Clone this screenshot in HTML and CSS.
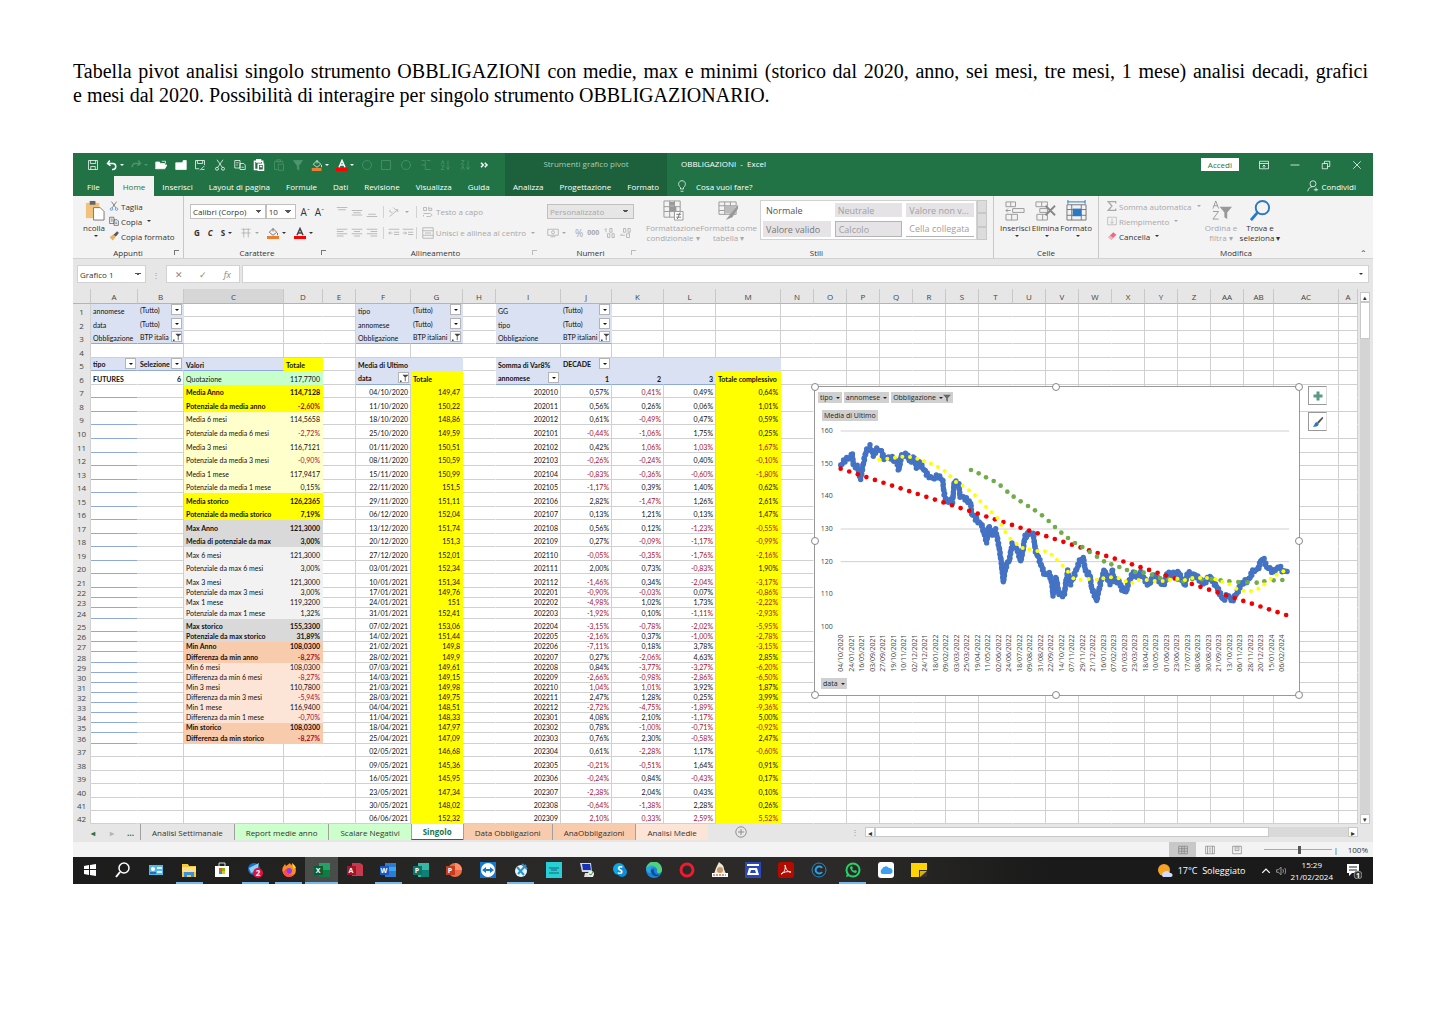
FILE: index.html
```
<!DOCTYPE html>
<html lang="it">
<head>
    <meta charset="UTF-8">
    <meta name="viewport" content="width=device-width, initial-scale=1.0">
    <title>OBBLIGAZIONI - Excel</title>
    <link rel="stylesheet" href="styles.css">
</head>
<body>

<p class="intro"><span class="full">Tabella pivot analisi singolo strumento OBBLIGAZIONI con medie, max e minimi (storico dal 2020, anno, sei mesi, tre mesi, 1 mese) analisi decadi, grafici</span> e mesi dal 2020. Possibilità di interagire per singolo strumento OBBLIGAZIONARIO.</p>

<div class="window">
    <!-- Title bar -->
    <header class="titlebar">
        <div class="quick">
            <button aria-label="Salva"><svg viewBox="0 0 16 16"><path d="M2 2h12v12H2zM4.500 2v4h7V2M5 14v-4h6v4"/></svg></button>
            <button aria-label="Annulla"><svg viewBox="0 0 16 16"><path d="M5 2 2 6l4 3M2 6h7a4 4 0 0 1 0 8H8" stroke-width="2"/></svg><i class="caret"></i></button>
            <button class="dim" aria-label="Ripeti"><svg viewBox="0 0 16 16"><path d="m11 2 3 4-4 3M14 6H7a4 4 0 0 0-4 5" stroke-width="2"/></svg><i class="caret"></i></button>
            <button aria-label="Apri"><svg viewBox="0 0 16 16"><path d="M1 13V4h5l1 2h6v2M1 13l3-5h12l-3 5z" class="fill"/><path d="M9 3h5v3"/></svg></button>
            <button aria-label="Cartella"><svg viewBox="0 0 16 16"><path d="M1 14V5h9l1-3h4v12z" class="fill"/></svg></button>
            <button aria-label="Salva con nome"><svg viewBox="0 0 16 16"><path d="M14 8V2H2v11h5M4.500 2v4h7V2M8 15l6-6M10 14h4"/></svg></button>
            <button aria-label="Taglia"><svg viewBox="0 0 16 16"><path d="m4 1 7 10M12 1 5 11"/><circle cx="4" cy="13" r="2"/><circle cx="12" cy="13" r="2"/></svg></button>
            <button aria-label="Copia"><svg viewBox="0 0 16 16"><path d="M1 2h7v10H1zM3 5h3M3 8h2M8 6h5l2 2v6H8zM10 11h3"/></svg></button>
            <button aria-label="Incolla"><svg viewBox="0 0 16 16"><path d="M6 14H2V3h11v3M5 1h5v3H5zM7 7h7v8H7zM9 10h3" stroke-width="2"/></svg></button>
            <button class="dim" aria-label="Incolla valori"><svg viewBox="0 0 16 16"><path d="M6 14H2V3h11v3M5 1h5v3H5zM7 7h7v8H7z"/></svg></button>
            <button class="dim" aria-label="Filtro"><svg viewBox="0 0 16 16"><path d="M2 2h12L9 9v6l-2-2V9z" class="fill"/></svg></button>
            <button aria-label="Colore riempimento"><svg viewBox="0 0 16 16"><path d="m3 7 5-5 5 5-5 4zM8 2v4M14 8v3"/><path d="M1 12h13v4H1z" fill="#ed7d31" stroke="none"/></svg><i class="caret"></i></button>
            <button aria-label="Colore carattere"><svg viewBox="0 0 16 16"><path d="m4 11 4-9 4 9M6 8h4" stroke-width="2"/><path d="M0 12h16v4H0z" fill="#f00" stroke="none"/></svg><i class="caret"></i></button>
            <button class="dim" aria-label="Ovale"><svg viewBox="0 0 16 16"><circle cx="8" cy="8" r="6"/></svg></button>
            <button class="dim" aria-label="Rettangolo"><svg viewBox="0 0 16 16"><path d="M2 2h12v12H2z"/></svg></button>
            <button class="dim" aria-label="Cerchio"><svg viewBox="0 0 16 16"><circle cx="8" cy="8" r="6"/></svg></button>
            <button class="dim" aria-label="Connettore"><svg viewBox="0 0 16 16"><path d="M2 2h5v12h7M9 2h5M2 8h5"/></svg></button>
            <button class="dim" aria-label="Ordine crescente"><svg viewBox="0 0 16 16"><path d="M3 7 5 2l2 5M3 9h4l-4 5h4M12 2v12l-2-3M12 14l2-3"/></svg></button>
            <button class="dim" aria-label="Ordine decrescente"><svg viewBox="0 0 16 16"><path d="M3 2h4L3 7h4M3 14l2-5 2 5M12 2v12l-2-3M12 14l2-3"/></svg></button>
            <button aria-label="Altro"><svg viewBox="0 0 16 16"><path d="m4 5 3 3-3 3M9 5l3 3-3 3" stroke-width="2"/></svg></button>
        </div>
        <div class="context">Strumenti grafico pivot</div>
        <div class="doc">OBBLIGAZIONI&nbsp; -&nbsp; Excel</div>
        <div class="controls">
            <button class="login">Accedi</button>
            <button aria-label="Opzioni barra"><svg viewBox="0 0 16 16"><path d="M2 3h12v10H2zM2 6h12M8 12V8M6 10l2-2 2 2"/></svg></button>
            <button aria-label="Riduci"><svg viewBox="0 0 16 16"><path d="M2 8h12"/></svg></button>
            <button aria-label="Ripristina"><svg viewBox="0 0 16 16"><path d="M3 6h7v7H3zM6 6V3h7v7h-3"/></svg></button>
            <button aria-label="Chiudi"><svg viewBox="0 0 16 16"><path d="m3 3 10 10M13 3 3 13"/></svg></button>
        </div>
    </header>

    <nav class="tabs">
        <div class="tabs-main">
            <button class="file">File</button>
            <button class="active">Home</button>
            <button>Inserisci</button>
            <button>Layout di pagina</button>
            <button>Formule</button>
            <button>Dati</button>
            <button>Revisione</button>
            <button>Visualizza</button>
            <button>Guida</button>
        </div>
        <div class="tabs-context">
            <button>Analizza</button>
            <button>Progettazione</button>
            <button>Formato</button>
        </div>
        <button class="tell"><svg viewBox="0 0 16 16"><path d="M6 12V10C2 7 3 1 8 1s6 6 2 9v2zM6 15h4"/></svg>Cosa vuoi fare?</button>
        <button class="share"><svg viewBox="0 0 16 16"><circle cx="8" cy="5" r="4"/><path d="M1 15c1-4 3-6 6-6M9 13h6M12 10v5"/></svg>Condividi</button>
    </nav>

    <!-- Ribbon -->
    <section class="ribbon">
        <div class="group line">
            <div class="tools">
                <button class="big paste"><svg viewBox="0 0 22 22"><path d="M2 3h14v16H2z" fill="#f0c27b"/><path d="M6 1h6v4H6z" fill="#666"/><path d="M10 8h7l4 4v9H10z" fill="#fff" stroke="#777"/></svg>ncolla<i class="caret"></i></button>
                <div class="stack">
                    <button><svg viewBox="0 0 16 16"><path d="m4 1 7 10M12 1 5 11" stroke="#444"/><g stroke="#2b79c2"><circle cx="4" cy="13" r="2"/><circle cx="12" cy="13" r="2"/></g></svg>Taglia</button>
                    <button><svg viewBox="0 0 16 16"><path d="M1 2h7v10H1zM3 5h3M3 8h3M8 6h5l2 2v7H8z" stroke="#444"/><path d="M10 10h3M10 12h3" stroke="#2b79c2"/></svg>Copia<i class="caret"></i></button>
                    <button><svg viewBox="0 0 16 16"><path d="m1 10 6-5 4 4-5 6z" fill="#e8b15c" stroke="none"/><path d="m8 6 5-5 2 2-4 5z" fill="#555"/></svg>Copia formato</button>
                </div>
            </div>
            <div class="name">Appunti<i class="launch"></i></div>
        </div>
        <div class="group">
            <div class="tools column">
                <div class="row">
                    <select class="font" aria-label="Tipo di carattere"><option>Calibri (Corpo)</option></select>
                    <select class="size" aria-label="Dimensione"><option>10</option></select>
                    <button class="glyph">A<sup>ˆ</sup></button>
                    <button class="glyph">A<sup>ˇ</sup></button>
                </div>
                <div class="row format">
                    <button><b>G</b></button>
                    <button><b><em>C</em></b></button>
                    <button><b>S</b><i class="caret"></i></button>
                    <button class="off"><svg viewBox="0 0 16 16"><path d="M2 3h12M2 8h12M5 2v12M11 2v12"/></svg><i class="caret"></i></button>
                    <button><svg viewBox="0 0 16 16"><path d="m3 7 5-5 5 5-5 4zM8 2v4M14 8v3" stroke="#555"/><path d="M0 12h16v4H0z" fill="#ed7d31" stroke="none"/></svg><i class="caret"></i></button>
                    <button><svg viewBox="0 0 16 16"><path d="m4 11 4-9 4 9M6 8h4" stroke="#444" stroke-width="2"/><path d="M0 12h16v4H0z" fill="#f00" stroke="none"/></svg><i class="caret"></i></button>
                </div>
            </div>
            <div class="name">Carattere<i class="launch"></i></div>
        </div>
        <div class="group">
            <div class="tools column off">
                <div class="row align">
                    <button aria-label="In alto"><svg viewBox="0 0 16 16"><path d="M1 2h14M3 5h10"/></svg></button>
                    <button aria-label="Al centro"><svg viewBox="0 0 16 16"><path d="M1 6h14M3 9h10M1 12h14"/></svg></button>
                    <button aria-label="In basso"><svg viewBox="0 0 16 16"><path d="M3 11h10M1 14h14"/></svg></button>
                    <button class="wide" aria-label="Orientamento"><svg viewBox="0 0 16 16"><path d="m2 14 11-9M13 5l-3 0M13 5v3M3 5a2 2 0 1 0 3 3M7 2l3 3"/></svg><i class="caret"></i></button>
                    <button><svg viewBox="0 0 16 16"><path d="M2 2h4v4H2zM9 1v5h4V3H9M2 10h8c4 0 4 4 0 4H6M2 12v2"/></svg>Testo a capo</button>
                </div>
                <div class="row align">
                    <button aria-label="Sinistra"><svg viewBox="0 0 16 16"><path d="M1 3h14M1 6h9M1 9h14M1 12h9"/></svg></button>
                    <button aria-label="Centra"><svg viewBox="0 0 16 16"><path d="M1 3h14M4 6h8M1 9h14M4 12h8"/></svg></button>
                    <button aria-label="Destra"><svg viewBox="0 0 16 16"><path d="M1 3h14M6 6h9M1 9h14M6 12h9"/></svg></button>
                    <button class="wide" aria-label="Rientro"><svg viewBox="0 0 16 16"><path d="M1 3h14M8 7h7M8 10h7M1 8h5M1 8l2-2M1 8l2 2"/></svg><svg viewBox="0 0 16 16"><path d="M1 3h14M8 7h7M8 10h7M1 8h5M6 8 4 6M6 8l-2 2"/></svg></button>
                    <button><svg viewBox="0 0 16 16"><path d="M1 1h14v14H1zM1 5h14M1 11h14M4 8h8"/></svg>Unisci e allinea al centro<i class="caret"></i></button>
                </div>
            </div>
            <div class="name">Allineamento<i class="launch pale"></i></div>
        </div>
        <div class="group">
            <div class="tools column off">
                <div class="row">
                    <select class="number" aria-label="Formato numero" disabled><option>Personalizzato</option></select>
                </div>
                <div class="row numeric">
                    <button aria-label="Valuta"><svg viewBox="0 0 16 16"><path d="M1 3h14v8H1zM5 13h6"/><circle cx="8" cy="7" r="2"/></svg><i class="caret"></i></button>
                    <button class="glyph">%</button>
                    <button class="zeros">000</button>
                    <button aria-label="Aumenta decimali"><svg viewBox="0 0 16 16"><path d="M4 2v5M2 4l2-2M9 2h3v5H9zM6 9h3v5H6zM12 9h3v5h-3z"/></svg></button>
                    <button aria-label="Riduci decimali"><svg viewBox="0 0 16 16"><path d="M6 2h3v5H6zM12 2h3v5h-3zM10 9h4v5h-4zM2 11h6M2 11l2-2"/></svg></button>
                </div>
            </div>
            <div class="name">Numeri<i class="launch pale"></i></div>
        </div>
        <div class="group">
            <div class="tools">
                <button class="big off"><svg viewBox="0 0 22 22"><path d="M1 1h17v17H1zM1 7h17M1 12h17M7 1v17M12 1v17" stroke="#999"/><path d="M7 2h5v4H7zM7 7h7v5H7z" fill="#999"/><path d="M12 12h9v9h-9z" fill="#fff" stroke="#999"/><path d="M14 15h5M14 18h5M18 13l-3 7" stroke="#777"/></svg>Formattazione<br>condizionale ▾</button>
                <button class="big off"><svg viewBox="0 0 22 22"><path d="M1 2h18v13H1zM1 6h18M1 11h18M7 2v13M13 2v13" stroke="#999"/><path d="M7 6h11v8H7z" fill="#bbb"/><path d="m21 5-8 10-5 6 7-3 6-9z" fill="#999"/></svg>Formatta come<br>tabella ▾</button>
                <div class="gallery">
                    <button class="normal">Normale</button>
                    <button>Neutrale</button>
                    <button>Valore non v...</button>
                    <button class="valid">Valore valido</button>
                    <button class="calc">Calcolo</button>
                    <button class="linked">Cella collegata</button>
                </div>
                <div class="spin"><i></i><i></i><i></i></div>
            </div>
            <div class="name">Stili</div>
        </div>
        <div class="group line both">
            <div class="tools cells">
                <button class="big"><svg viewBox="0 0 22 22"><path d="M1 2h10v5H1zM6 2v5M8 9h12v4H8zM1 15h12v6H1zM7 15v6M6 11H1l2-2M1 11l2 2" stroke="#999"/></svg>Inserisci<i class="caret"></i></button>
                <button class="big"><svg viewBox="0 0 22 22"><path d="M1 2h12v5H1zM7 2v5M5 9h8v4H5zM2 15h11v6H2zM8 15v6" stroke="#999"/><path d="m11 6 10 10M21 6 11 16" stroke="#888" stroke-width="2"/></svg>Elimina<i class="caret"></i></button>
                <button class="big"><svg viewBox="0 0 22 22"><path d="M1 5h20v16H1zM1 10h20M1 16h20M6 5v16M16 5v16" stroke="#777"/><path d="M7 9h9v8H7z" fill="#2b79c2"/><path d="M2 2h18M2 0v4M20 0v4" stroke="#2b79c2"/></svg>Formato<i class="caret"></i></button>
            </div>
            <div class="name">Celle</div>
        </div>
        <div class="group">
            <div class="tools edit">
                <div class="stack">
                    <button class="off"><svg viewBox="0 0 16 16"><path d="M14 4V1H2l6 7-6 7h12v-3" stroke-width="2"/></svg>Somma automatica<i class="caret"></i></button>
                    <button class="off"><svg viewBox="0 0 16 16"><path d="M1 2h14v12H1zM8 4v8M5 9l3 3 3-3"/></svg>Riempimento<i class="caret"></i></button>
                    <button><svg viewBox="0 0 16 16"><path d="m2 10 8-8 5 4-8 8z" fill="#ee6a80" stroke="none"/><path d="m2 10 3-3 5 4-3 3z" fill="#f6b4c0" stroke="none"/></svg>Cancella<i class="caret"></i></button>
                </div>
                <button class="big off"><svg viewBox="0 0 22 22"><path d="m2 9 3-8 3 8M3 6h4M2 12h6l-6 8h6" stroke="#999"/><path d="M9 7h13l-5 6v7l-3-2v-5z" fill="#999"/></svg>Ordina e<br>filtra ▾</button>
                <button class="big"><svg viewBox="0 0 22 22"><circle cx="13" cy="8" r="7" stroke="#2b79c2" stroke-width="2"/><path d="m8 13-7 8" stroke="#2b79c2" stroke-width="3"/></svg>Trova e<br>seleziona ▾</button>
            </div>
            <div class="name">Modifica<i class="collapse">⌃</i></div>
        </div>
    </section>

    <!-- Formula bar -->
    <div class="formula">
        <select class="namebox" aria-label="Casella nome"><option>Grafico 1</option></select>
        <span class="grip">⋮</span>
        <div class="fx"><button>✕</button><button>✓</button><button><em>fx</em></button></div>
        <div class="entry"><input type="text" aria-label="Barra della formula"><i class="caret"></i></div>
    </div>

    <!-- Worksheet -->
    <main class="sheet">
        <div class="grid">
            <table id="cells"></table>
            <div class="chart">
                <div class="fields">
                    <button>tipo <i class="caret"></i></button>
                    <button>annomese <i class="caret"></i></button>
                    <button>Obbligazione <i class="caret"></i><svg viewBox="0 0 10 10"><path d="M0 1h10L6 5v5L4 8V5z" fill="#666" stroke="none"/></svg></button>
                </div>
                <button class="value">Media di Ultimo</button>
                <svg id="plot" viewBox="45 153 1452 768"></svg>
                <button class="axis">data <i class="caret"></i></button>
                <span class="handle nw"></span><span class="handle n"></span><span class="handle ne"></span>
                <span class="handle w"></span><span class="handle e"></span>
                <span class="handle sw"></span><span class="handle s"></span><span class="handle se"></span>
                <div class="side">
                    <button aria-label="Elementi grafico"><svg viewBox="0 0 16 16"><path d="M8 2v12M2 8h12" stroke="#5b9a86" stroke-width="4"/></svg></button>
                    <button aria-label="Stili grafico"><svg viewBox="0 0 16 16"><path d="m14 1-7 7 2 2 6-7z" fill="#555" stroke="none"/><path d="M7 8c-4 0-3 5-6 6 4 1 8 0 8-4z" fill="#2b79c2" stroke="none"/></svg></button>
                </div>
            </div>
        </div>
        <div class="vscroll"><button aria-label="Su">▴</button><span class="thumb"></span><span class="track"></span><button aria-label="Giù">▾</button></div>
    </main>

    <div class="sheets">
        <button class="nav">◂</button><button class="nav pale">▸</button><button class="nav">...</button>
        <button class="tab">Analisi Settimanale</button>
        <button class="tab green">Report medie anno</button>
        <button class="tab green">Scalare Negativi</button>
        <button class="tab current">Singolo</button>
        <button class="tab orange">Data Obbligazioni</button>
        <button class="tab orange">AnaObbligazioni</button>
        <button class="tab peach">Analisi Medie</button>
        <button class="add" aria-label="Nuovo foglio"><svg viewBox="0 0 16 16"><circle cx="8" cy="8" r="7"/><path d="M8 4v8M4 8h8"/></svg></button>
        <span class="grip">⋮</span>
        <div class="hscroll"><button>◂</button><span class="thumb"></span><span class="track"></span><button>▸</button></div>
    </div>

    <div class="status">
        <button class="on" aria-label="Normale"><svg viewBox="0 0 16 16"><path d="M1 2h14v12H1zM1 6h14M1 10h14M6 2v12M10 2v12"/></svg></button>
        <button aria-label="Layout di pagina"><svg viewBox="0 0 16 16"><path d="M1 2h14v12H1zM4 2v12M12 2v12M6 5h4M6 8h4M6 11h4"/></svg></button>
        <button aria-label="Interruzioni"><svg viewBox="0 0 16 16"><path d="M1 2h14v12H1zM5 2v7h6V2M8 2v5"/></svg></button>
        <input class="zoom" type="range" min="0" max="100" value="52" aria-label="Zoom">
        <span class="plus">|</span>
        <span class="percent">100%</span>
    </div>

    <!-- Windows taskbar -->
    <footer class="taskbar">
        <div class="apps">
            <button aria-label="Start"><svg viewBox="0 0 16 16"><path d="M2 4l5-1v4H2zM8 3l6-1v5H8zM2 8h5v5l-5-1zM8 8h6v6l-6-1z" fill="#fff"/></svg></button>
            <button aria-label="Cerca"><svg viewBox="0 0 16 16"><circle cx="9" cy="6" r="5" stroke="#fff" stroke-width="1.500"/><path d="m5 10-4 5" stroke="#fff" stroke-width="2"/></svg></button>
            <button aria-label="Pannello"><svg viewBox="0 0 16 16"><path d="M1 3h14v10H1z" fill="#56b6e8"/><circle cx="5" cy="7" r="2" fill="#fff"/><path d="M9 5h5v2H9zM9 9h5v2H9z" fill="#d9f1ff"/><path d="M2 10h6v2H2z" fill="#1f70b8"/></svg></button>
            <button class="run" aria-label="Esplora file"><svg viewBox="0 0 16 16"><path d="M1 2h6l1 2h7v11H1z" fill="#f8c73c"/><path d="M1 5h14v5H1z" fill="#ffe08a"/><path d="M3 10h10v5h-3v-2H6v2H3z" fill="#3d8fd8"/></svg></button>
            <button aria-label="Store"><svg viewBox="0 0 16 16"><path d="M1 4h14v11H1z" fill="#fff"/><path d="M5 4V1h6v3" stroke="#ddd"/><path d="M5 6h3v3H5z" fill="#f25022"/><path d="M8 6h3v3H8z" fill="#7fba00"/><path d="M5 9h3v3H5z" fill="#00a4ef"/><path d="M8 9h3v3H8z" fill="#ffb900"/></svg></button>
            <button class="run" aria-label="Posta"><svg viewBox="0 0 16 16"><circle cx="7" cy="7" r="6" fill="#1c6fc4"/><path d="M2 6 12 1l-2 8-6 2z" fill="#8fd0f5"/><circle cx="11" cy="11" r="5" fill="#e0123c"/><text x="11" y="14" font-size="8" text-anchor="middle" fill="#fff">2</text></svg></button>
            <button class="run" aria-label="Firefox"><svg viewBox="0 0 16 16"><path d="M8 15A7 7 0 0 1 2 5l2-3 1 2 4-3c0 2 5 2 6 7a7 7 0 0 1-7 7z" fill="#ff8a1e"/><path d="M15 6c-1-3-3-4-4-5 0 3 2 4 1 6z" fill="#ffd43a"/><circle cx="8" cy="9" r="3" fill="#8a3df0"/><path d="M2 10a6 6 0 0 0 11 2c-4 2-7 0-8-5z" fill="#ff4a4f"/></svg></button>
            <button class="run open" aria-label="Excel"><svg viewBox="0 0 16 16"><path d="M5 1h11v14H5z" fill="#21a366"/><path d="M5 8h11v7H5z" fill="#107c41"/><path d="M0 4h9v9H0z" fill="#0e5c33"/><text x="4" y="11" font-size="7" text-anchor="middle" fill="#fff">X</text></svg></button>
            <button aria-label="Access"><svg viewBox="0 0 16 16"><path d="M5 1h8l3 2v11H5z" fill="#c8394d"/><path d="M0 4h9v9H0z" fill="#a4142c"/><text x="4" y="11" font-size="7" text-anchor="middle" fill="#fff">A</text></svg></button>
            <button class="run" aria-label="Word"><svg viewBox="0 0 16 16"><path d="M5 1h11v14H5z" fill="#2b7cd3"/><path d="M5 5h11v4H5z" fill="#41a5ee"/><path d="M0 4h9v9H0z" fill="#185abd"/><text x="4" y="11" font-size="7" text-anchor="middle" fill="#fff">W</text></svg></button>
            <button aria-label="Publisher"><svg viewBox="0 0 16 16"><path d="M5 1h11v14H5z" fill="#37b5a5"/><path d="M8 8h8v7H8z" fill="#0f8074"/><path d="M0 4h9v9H0z" fill="#077568"/><text x="4" y="11" font-size="7" text-anchor="middle" fill="#fff">P</text></svg></button>
            <button aria-label="PowerPoint"><svg viewBox="0 0 16 16"><circle cx="9" cy="8" r="7" fill="#ed6c47"/><path d="M9 1a7 7 0 0 1 7 7H9z" fill="#ff8f6b"/><path d="M0 4h9v9H0z" fill="#c43e1c"/><text x="4" y="11" font-size="7" text-anchor="middle" fill="#fff">P</text></svg></button>
            <button aria-label="TeamViewer"><svg viewBox="0 0 16 16"><path d="M0 0h16v16H0z" fill="#1677d2"/><circle cx="8" cy="8" r="7" fill="#fff"/><path d="m2 8 4-3v2h4V5l4 3-4 3V9H6v2z" fill="#1677d2"/></svg></button>
            <button class="run" aria-label="Xampp"><svg viewBox="0 0 16 16"><circle cx="8" cy="9" r="6" fill="#e8f4fb"/><path d="m4 5 7 8M13 3 5 12M9 2l5 5" stroke="#2a93cf" stroke-width="2"/></svg></button>
            <button aria-label="Money"><svg viewBox="0 0 16 16"><path d="M0 0h16v16H0z" fill="#27cfd6"/><path d="M3 6h10M5 8h6M3 11h10" stroke="#12666e"/></svg></button>
            <button aria-label="Desktop remoto"><svg viewBox="0 0 16 16"><path d="M1 1h11l1 9H3z" fill="#cdd6e6"/><path d="M3 2h8l1 6H4z" fill="#1733b8"/><path d="M6 11h8v4H5z" fill="#ddd"/><circle cx="12" cy="12" r="3" fill="#eee"/><path d="m10 12 2 1 2-3" stroke="#3a9a3a"/></svg></button>
            <button aria-label="Skype"><svg viewBox="0 0 16 16"><circle cx="7" cy="7" r="6" fill="#0ba5e8"/><circle cx="10" cy="10" r="5" fill="#0a8fd8"/><text x="8" y="12" font-size="10" text-anchor="middle" fill="#fff">S</text></svg></button>
            <button aria-label="Edge"><svg viewBox="0 0 16 16"><circle cx="8" cy="8" r="8" fill="#1b82d6"/><path d="M0 7a8 8 0 0 1 16 1c0 4-6 4-5 1 1-5-6-6-11-2z" fill="#4fd27a"/><path d="M0 7c3-5 8-4 10-1-4-2-7 1-5 5-3 0-5-2-5-4z" fill="#2ba7df"/><path d="M5 8c0 5 4 8 9 5-5 0-7-3-6-6z" fill="#0c4c9c"/></svg></button>
            <button aria-label="Opera"><svg viewBox="0 0 16 16"><ellipse cx="8" cy="8" rx="6" ry="6" stroke="#ee1c2e" stroke-width="3"/></svg></button>
            <button aria-label="Gelato"><svg viewBox="0 0 16 16"><path d="M7 0c2 2 5 3 5 7l2 5H2l2-6z" fill="#f0e6d4"/><circle cx="8" cy="8" r="3" fill="#c59a6a"/><path d="M0 11h16v4H0z" fill="#fff"/><path d="M1 13h13" stroke="#c22" stroke-dasharray="2 1"/></svg></button>
            <button aria-label="Scanner"><svg viewBox="0 0 16 16"><path d="M0 0h16v16H0z" fill="#2b48b8"/><path d="M2 2h12v2H2zM4 6h8l2 7H2z" fill="#fff"/><path d="M6 8h4l1 3H5z" fill="#2b48b8"/></svg></button>
            <button aria-label="Acrobat"><svg viewBox="0 0 16 16"><rect width="16" height="16" rx="3" fill="#b30b00"/><path d="M3 12c3-1 5-5 4-9 1 5 3 7 6 7-4-1-7 0-10 2z" stroke="#fff"/></svg></button>
            <button aria-label="CCleaner"><svg viewBox="0 0 16 16"><circle cx="8" cy="8" r="7" stroke="#1d8bd1"/><path d="M11 6a3.500 3.500 0 1 0 0 4" stroke="#2aa0ea" stroke-width="2"/></svg></button>
            <button class="run" aria-label="WhatsApp"><svg viewBox="0 0 16 16"><circle cx="8" cy="8" r="6.500" stroke="#25d366" stroke-width="2"/><path d="m1 15 1-4 3 3z" fill="#25d366"/><path d="M5 5c0 3 3 6 6 6l1-2-2-1-1 1-2-2 1-1-1-2z" fill="#25d366"/></svg></button>
            <button aria-label="iCloud"><svg viewBox="0 0 16 16"><rect width="16" height="16" rx="3" fill="#fff"/><path d="M4 12a3 3 0 0 1 0-5 4 4 0 0 1 7-1 3 3 0 0 1 1 6z" fill="#3aa0f4"/></svg></button>
            <button aria-label="Note"><svg viewBox="0 0 16 16"><path d="M0 1h16v14H0z" fill="#ffd400"/><path d="M8 8h8v7H8z" fill="#333"/><path d="M9 15v-6h7z" fill="#d9b300"/></svg></button>
        </div>
        <div class="tray">
            <svg viewBox="0 0 16 16"><circle cx="7" cy="7" r="6" fill="#f7a325"/><path d="M6 14a3 3 0 0 1 1-5 4 4 0 0 1 6 1 2 2 0 0 1 1 4z" fill="#cfdcff"/></svg>
            <span class="weather">17°C&nbsp; Soleggiato</span>
            <svg class="small" viewBox="0 0 16 16"><path d="m2 11 6-6 6 6" stroke="#fff" stroke-width="2"/></svg>
            <svg class="small" viewBox="0 0 16 16"><path d="M1 6h3l4-4v12l-4-4H1zM11 5c1 2 1 4 0 6M14 3c2 3 2 7 0 10" stroke="#ddd"/></svg>
            <div class="clock">15:29<br>21/02/2024</div>
            <svg viewBox="0 0 16 16"><path d="M1 1h12v9H6l-3 3v-3H1z" fill="#fff"/><path d="M3 4h8M3 7h8" stroke="#222"/><circle cx="12" cy="12" r="4" fill="#333" stroke="#888"/><text x="12" y="15" font-size="7" text-anchor="middle" fill="#fff">1</text></svg>
        </div>
    </footer>
</div>

<script src="script.js"></script>
</body>
</html>
```

FILE: styles.css
```
* {
    box-sizing: border-box;
}

body {
    margin: 0;
    padding: 59px 72px 0 73px;
    background: #fff;
    color: #333;
    font-family: "Open Sans", "Noto Sans", sans-serif;
    font-size: 8px;
}

.intro {
    margin: 0 5px 46px 0;
    color: #000;
    font-family: "Liberation Serif", serif;
    font-size: 20px;
    line-height: 24px;
}

.intro .full {
    display: block;
    text-align: justify;
    text-align-last: justify;
}

button,
input,
select {
    font: inherit;
    color: inherit;
    margin: 0;
    padding: 0;
    border: 0;
    border-radius: 0;
    background: none;
}

button {
    display: flex;
    align-items: center;
    white-space: nowrap;
}

select {
    appearance: none;
    opacity: 1;
}

svg {
    width: 12px;
    height: 12px;
    flex: none;
    fill: none;
    stroke-width: 1;
}

sup {
    font-size: 7px;
    line-height: 1;
}

.caret {
    flex: none;
    margin-left: 3px;
    border: 2px solid transparent;
    border-top-color: currentColor;
    border-bottom: 0;
}

.off {
    color: #a8a8a8;
}

/* Title bar */
.titlebar {
    display: flex;
    height: 23px;
    background: #217346;
    color: #fff;
}

.titlebar svg,
.tabs svg {
    stroke: currentColor;
}

.quick {
    display: flex;
    width: 432px;
    padding: 0 11px 0 10px;
}

.quick button {
    flex: 4;
    justify-content: center;
}

.quick button:has(.caret) {
    flex: 5;
}

.quick .caret {
    margin-left: 2px;
}

.quick .fill {
    fill: currentColor;
}

.quick .dim {
    color: #4f9470;
}

.context {
    width: 162px;
    background: #1c613b;
    color: #a9cdb9;
    line-height: 22px;
    text-align: center;
}

.doc {
    flex: 1;
    padding-left: 14px;
    line-height: 22px;
}

.controls {
    display: flex;
    gap: 19px;
    padding-right: 10px;
}

.controls .login {
    align-self: center;
    height: 13px;
    padding: 0 7px;
    background: #fff;
    color: #217346;
}

/* Ribbon tabs */
.tabs {
    display: flex;
    height: 20px;
    background: #217346;
    color: #fff;
}

.tabs-main {
    display: flex;
    width: 432px;
    padding-left: 6px;
}

.tabs button {
    padding: 0 8px;
}

.tabs .file {
    margin-right: 6px;
}

.tabs .active {
    padding: 0 9px;
    background: #f3f3f3;
    color: #217346;
}

.tabs-context {
    display: flex;
    width: 162px;
    background: #1c613b;
}

.tabs .tell {
    gap: 8px;
    padding-left: 9px;
}

.tabs .share {
    gap: 2px;
    margin-left: auto;
    padding-right: 17px;
}

/* Ribbon */
.ribbon {
    display: grid;
    grid-template-columns: 111fr 146fr 211fr 99fr 353fr 106fr 274fr;
    height: 63px;
    background: #f3f3f3;
    border-bottom: 1px solid #d2d2d2;
}

.group {
    display: flex;
    flex-direction: column;
    min-width: 0;
    padding-top: 4px;
}

.group.line {
    border-right: 1px solid #c8c8c8;
}

.group.both {
    border-left: 1px solid #c8c8c8;
}

.ribbon svg {
    stroke: currentColor;
}

.tools {
    display: flex;
    flex: 1;
    min-height: 0;
    padding: 0 6px;
}

.column {
    flex-direction: column;
    gap: 6px;
    padding-top: 4px;
}

.name {
    position: relative;
    height: 11px;
    text-align: center;
    line-height: 11px;
}

.launch {
    position: absolute;
    top: 3px;
    right: 4px;
    width: 5px;
    height: 5px;
    border-top: 1px solid #777;
    border-left: 1px solid #777;
}

.launch.pale {
    border-color: #bbb;
}

.collapse {
    position: absolute;
    right: 6px;
    font-style: normal;
}

.big {
    flex-direction: column;
    gap: 2px;
    line-height: 10px;
}

.ribbon .big svg {
    width: 21px;
    height: 21px;
    stroke: none;
}

.stack {
    display: flex;
    flex-direction: column;
    gap: 3px;
}

.stack button {
    height: 12px;
    gap: 2px;
}

.stack svg {
    width: 10px;
    height: 10px;
}

.paste {
    width: 30px;
}

.row {
    display: flex;
    align-items: center;
    height: 15px;
}

/* Drop-downs with a small arrow at the right */
.ribbon select,
.namebox {
    padding-left: 2px;
    border: 1px solid #c0c0c0;
    background-color: #fff;
    background-image: linear-gradient(45deg, transparent 50%, #555 50%), linear-gradient(-45deg, transparent 50%, #555 50%);
    background-position: right 7px center, right 4px center;
    background-size: 3px 3px;
    background-repeat: no-repeat;
}

.ribbon select {
    height: 15px;
}

.ribbon .font {
    width: 76px;
}

.ribbon .size {
    width: 30px;
}

.ribbon .number {
    width: 88px;
    background-color: #e6e6e6;
    color: #a8a8a8;
}

.glyph {
    margin-left: 5px;
    font-size: 10px;
}

.format {
    gap: 8px;
    padding-left: 4px;
}

.align {
    gap: 3px;
}

.align .wide {
    width: 34px;
    margin: 0 2px;
    padding-left: 4px;
    border-left: 1px solid #d2d2d2;
    border-right: 1px solid #d2d2d2;
}

.align button {
    gap: 2px;
}

.numeric {
    gap: 4px;
}

.zeros {
    font-size: 7px;
    font-weight: 700;
}

.gallery {
    display: grid;
    grid-template-columns: repeat(3, 1fr);
    gap: 4px;
    flex: 1;
    height: 40px;
    margin-left: 3px;
    padding: 2px;
    background: #fff;
    border: 1px solid #d2d2d2;
}

.gallery button {
    overflow: hidden;
    padding-left: 3px;
    background: #e6e3e6;
    color: #a0a0a0;
    font-size: 9px;
}

.gallery .normal {
    background: #fff;
    color: #555;
}

.gallery .valid {
    color: #777;
}

.gallery .calc {
    border: 1px solid #b4b4b4;
}

.gallery .linked {
    background: #fff;
    border-bottom: 1px solid #b4b4b4;
}

.spin {
    display: flex;
    flex-direction: column;
    width: 10px;
    height: 40px;
}

.spin i {
    flex: 1;
    background: #dcdcdc;
    border: 1px solid #c8c8c8;
}

.cells {
    justify-content: space-between;
}

.edit {
    padding-left: 8px;
}

.edit .big {
    width: 38px;
    margin-left: 1px;
}

.edit .stack {
    width: 94px;
}

/* Formula bar */
.formula {
    display: flex;
    align-items: center;
    height: 30px;
    padding: 0 4px;
    background: #e6e6e6;
}

.namebox,
.fx,
.entry {
    height: 18px;
    border: 1px solid #d2d2d2;
}

.namebox {
    width: 69px;
}

.grip {
    width: 20px;
    color: #999;
    text-align: center;
}

.fx {
    display: flex;
    justify-content: space-around;
    width: 74px;
    margin-right: 2px;
    background: #fff;
    color: #888;
    font-size: 9px;
}

.entry {
    display: flex;
    align-items: center;
    flex: 1;
    padding-right: 5px;
    background: #fff;
}

.entry input {
    flex: 1;
}

/* Worksheet */
.sheet {
    display: flex;
    background: #e6e6e6;
    font-size: 7px;
}

.grid {
    position: relative;
    flex: 1;
    min-width: 0;
}

#cells {
    width: 100%;
    table-layout: fixed;
    border-spacing: 0;
    background: #fff;
    color: #111;
    font-family: Lato, "Open Sans", sans-serif;
    line-height: 9px;
}

#cells th,
#cells td {
    height: inherit;
    padding: 0 2px;
    overflow: hidden;
    vertical-align: bottom;
    white-space: nowrap;
    border-right: 1px solid #d0d0d0;
    border-bottom: 1px solid #d0d0d0;
}

#cells td:has(.drop) {
    line-height: 12px;
}

#cells th {
    padding: 0;
    background: #e6e6e6;
    border-bottom-color: #e6e6e6;
    color: #444;
    font-family: "Open Sans", sans-serif;
    font-weight: 400;
    font-size: 8px;
    text-align: center;
}

#cells thead tr {
    height: 15px;
}

#cells thead th {
    vertical-align: middle;
    border-right-color: #c8c8c8;
    border-bottom-color: #b4b4b4;
}

#cells thead .selected {
    background: #d6d6d6;
}

.h10 { height: 10px; }
.h11 { height: 11px; }
.h13 { height: 13px; }
.h14 { height: 14px; }

#cells .open {
    border-right-color: transparent;
}

#cells .plain {
    border-bottom-color: transparent;
}

#cells .num {
    text-align: right;
}

#cells .neg {
    color: #a8102a;
}

#cells .bold {
    font-weight: 700;
}

#cells .rule {
    border-bottom-color: #8ea9db;
}

#cells .pivot,
#cells .yellow,
#cells .mint,
#cells .cream,
#cells .grey,
#cells .silver,
#cells .orange,
#cells .peach {
    border-color: transparent;
}

#cells .pivot { background: #d9e1f2; }
#cells .yellow { background: #ff0; }
#cells .mint { background: #c6ffcc; }
#cells .cream { background: #ffffcc; }
#cells .grey { background: #d9d9d9; }
#cells .silver { background: #f2f2f2; }
#cells .orange { background: #f8cbad; }
#cells .peach { background: #fce4d6; }

#cells .pivot.rule {
    border-bottom-color: #8ea9db;
}

.drop {
    float: right;
    width: 11px;
    height: 11px;
    margin-right: -1px;
    justify-content: center;
    background: #fff;
    border: 1px solid #b4b4b4;
}

.drop .caret {
    margin: 0;
}

.drop svg {
    width: 8px;
    height: 8px;
    fill: #444;
}

.vscroll {
    display: flex;
    flex-direction: column;
    width: 15px;
    padding: 3px 3px 0 2px;
    background: #e6e6e6;
}

.vscroll button,
.hscroll button {
    width: 10px;
    height: 10px;
    justify-content: center;
    background: #fff;
    border: 1px solid #c8c8c8;
}

.vscroll .thumb {
    height: 37px;
    background: #fff;
    border: 1px solid #c8c8c8;
}

.vscroll .track {
    flex: 1;
    background: #d4d4d4;
}

/* Pivot chart */
.chart {
    position: absolute;
    left: 741px;
    top: 97px;
    display: flex;
    flex-direction: column;
    align-items: flex-start;
    width: 486px;
    height: 310px;
    padding-top: 5px;
    background: #fff;
    border: 1px solid #999;
}

.fields {
    display: flex;
    gap: 2px;
    margin-left: 3px;
}

.fields button,
.value,
.axis {
    height: 11px;
    padding: 0 2px;
    background: #d0d0d0;
    color: #222;
}

.fields svg {
    width: 8px;
    height: 8px;
}

.value {
    margin: 7px 0 0 7px;
}

.axis {
    margin: 1px 0 0 6px;
}

#plot {
    width: 484px;
    height: 256px;
}

#plot text {
    fill: #444;
    font-size: 21px;
}

.handle {
    position: absolute;
    width: 8px;
    height: 8px;
    background: #fff;
    border: 1px solid #888;
    border-radius: 50%;
}

.nw, .n, .ne { top: -4px; }
.w, .e { top: 150px; }
.sw, .s, .se { bottom: -4px; }
.nw, .w, .sw { left: -4px; }
.n, .s { left: 237px; }
.ne, .e, .se { right: -4px; }

.side {
    position: absolute;
    left: 493px;
    top: -1px;
    display: flex;
    flex-direction: column;
    gap: 7px;
}

.side button {
    width: 19px;
    height: 19px;
    justify-content: center;
    background: #fff;
    border: 1px solid #999;
    border-right-color: #ddd;
}

/* Sheet tabs */
.sheets {
    display: flex;
    height: 18px;
    padding: 0 15px 2px 10px;
    background: #e6e6e6;
}

.nav {
    width: 19px;
    justify-content: center;
    color: #217346;
    font-weight: 700;
}

.nav.pale {
    color: #b4b4b4;
}

.tab {
    padding: 0 11px;
    border-left: 1px solid #a0a0a0;
    color: #333;
}

.tab.green { background: #ccffcc; }
.tab.orange { background: #f8cbad; }
.tab.peach { background: #fce4d6; }

.tab.current {
    background: #fff;
    border-bottom: 1px solid #217346;
    color: #217346;
    font-weight: 700;
}

.add {
    margin: 0 auto 0 27px;
}

.add svg,
.status svg {
    stroke: #777;
}

.sheets .grip {
    line-height: 16px;
}

.hscroll {
    display: flex;
    align-items: center;
    width: 493px;
}

.hscroll .thumb,
.hscroll .track {
    flex: 394;
    height: 10px;
    background: #fff;
    border: 1px solid #c8c8c8;
}

.hscroll .track {
    flex: 79;
    background: #d9d9d9;
    border: 0;
}

/* Status bar */
.status {
    display: flex;
    justify-content: flex-end;
    height: 15px;
    padding-right: 5px;
    background: #f3f3f3;
}

.status button {
    width: 27px;
    justify-content: center;
}

.status .on {
    background: #c8c8c8;
}

.status svg {
    width: 10px;
    height: 10px;
}

.zoom {
    width: 68px;
    height: 15px;
    margin: 0 0 0 14px;
    appearance: none;
    background: linear-gradient(#aaa, #aaa) center / 100% 1px no-repeat;
}

.zoom::-webkit-slider-thumb {
    appearance: none;
    width: 3px;
    height: 8px;
    background: #555;
}

.plus {
    width: 8px;
    line-height: 15px;
    text-align: center;
}

.percent {
    width: 28px;
    line-height: 15px;
    text-align: right;
}

/* Taskbar */
.taskbar {
    display: flex;
    height: 27px;
    background: linear-gradient(90deg, #1c1c1c, #2b2a28 40%, #2b2a28 60%, #1a1a1a 75%);
    color: #fff;
}

.apps {
    display: flex;
    flex: 870;
}

.apps button {
    flex: 1;
    justify-content: center;
    margin: 0 3px;
    border-bottom: 2px solid transparent;
}

.apps .run {
    border-bottom-color: #76b9ed;
}

.apps .open {
    margin: 0;
    padding: 0 3px;
    background: #4a4c4a;
}

.taskbar svg {
    width: 16px;
    height: 16px;
}

.taskbar text {
    font-weight: 700;
}

.tray {
    display: flex;
    flex: 430;
    align-items: center;
    justify-content: flex-end;
    padding-right: 11px;
    gap: 5px;
}

.tray .weather {
    margin-right: 10px;
    font-size: 9px;
}

.taskbar .small {
    width: 10px;
    height: 10px;
}

.clock {
    margin-right: 8px;
    line-height: 12px;
    text-align: center;
}
```

FILE: script.js
```
// Column name, width, and whether the right gridline is hidden
const columns = [
    ['A', 47, 1], ['B', 46], ['C', 100], ['D', 39, 1], ['E', 33], ['F', 55], ['G', 52, 1], ['H', 33, 1],
    ['I', 65], ['J', 51], ['K', 52], ['L', 52], ['M', 65], ['N', 33, 1], ['O', 33], ['P', 33], ['Q', 33, 1],
    ['R', 33], ['S', 33], ['T', 34, 1], ['U', 33], ['V', 33], ['W', 33, 1], ['X', 33], ['Y', 33], ['Z', 33],
    ['AA', 33], ['AB', 30], ['AC', 65], ['A', 0]
];

const heights = [13, 14, 13, 14, 13, 14, 13, 14, 13, 14, 14, 13, 14, 13, 14, 13, 14, 13, 14, 13, 14,
    10, 10, 11, 13, 10, 10, 11, 10, 10, 10, 10, 10, 10, 10, 11, 13, 14, 13, 14, 13, 13];

const plainRows = [7, 9, 14, 18, 23, 24, 29];

// Label, value, fill (rows 6 to 36)
const summary = [
    ['Quotazione', '117,7700', 'mint'],
    ['Media Anno', '114,7128', 'yellow bold'],
    ['Potenziale da media anno', '-2,60%', 'yellow bold'],
    ['Media 6 mesi', '114,5658', 'cream'],
    ['Potenziale da media 6 mesi', '-2,72%', 'cream'],
    ['Media 3 mesi', '116,7121', 'cream'],
    ['Potenziale da media 3 mesi', '-0,90%', 'cream'],
    ['Media 1 mese', '117,9417', 'cream'],
    ['Potenziale da media 1 mese', '0,15%', 'cream'],
    ['Media storico', '126,2365', 'yellow bold'],
    ['Potenziale da media storico', '7,19%', 'yellow bold'],
    ['Max Anno', '121,3000', 'grey bold'],
    ['Media di potenziale da max', '3,00%', 'grey bold'],
    ['Max 6 mesi', '121,3000', 'silver'],
    ['Potenziale da max 6 mesi', '3,00%', 'silver'],
    ['Max 3 mesi', '121,3000', 'silver'],
    ['Potenziale da max 3 mesi', '3,00%', 'silver'],
    ['Max 1 mese', '119,3200', 'silver'],
    ['Potenziale da max 1 mese', '1,32%', 'silver'],
    ['Max storico', '155,3300', 'grey bold'],
    ['Potenziale da max storico', '31,89%', 'grey bold'],
    ['Min Anno', '108,0300', 'orange bold'],
    ['Differenza da min anno', '-8,27%', 'orange bold'],
    ['Min 6 mesi', '108,0300', 'peach'],
    ['Differenza da min 6 mesi', '-8,27%', 'peach'],
    ['Min 3 mesi', '110,7800', 'peach'],
    ['Differenza da min 3 mesi', '-5,94%', 'peach'],
    ['Min 1 mese', '116,9400', 'peach'],
    ['Differenza da min 1 mese', '-0,70%', 'peach'],
    ['Min storico', '108,0300', 'orange bold'],
    ['Differenza da min storico', '-8,27%', 'orange bold']
];

// Columns F, G, I to M from row 7; "!" marks a red value without sign
const data = `04/10/2020 149,47 202010 0,57% !0,41% 0,49% 0,64%
11/10/2020 150,22 202011 0,56% 0,26% 0,06% 1,01%
18/10/2020 148,86 202012 0,61% -0,49% 0,47% 0,59%
25/10/2020 149,59 202101 -0,44% -1,06% 1,75% 0,25%
01/11/2020 150,51 202102 0,42% !1,06% !1,03% !1,67%
08/11/2020 150,59 202103 -0,26% -0,24% 0,40% -0,10%
15/11/2020 150,99 202104 -0,83% -0,36% -0,60% -1,80%
22/11/2020 151,5 202105 -1,17% 0,39% 1,40% 0,62%
29/11/2020 151,11 202106 2,82% -1,47% 1,26% 2,61%
06/12/2020 152,04 202107 0,13% 1,21% 0,13% 1,47%
13/12/2020 151,74 202108 0,56% 0,12% -1,23% -0,55%
20/12/2020 151,3 202109 0,27% -0,09% -1,17% -0,99%
27/12/2020 152,01 202110 -0,05% -0,35% -1,76% -2,16%
03/01/2021 152,34 202111 2,00% 0,73% -0,83% 1,90%
10/01/2021 151,34 202112 -1,46% 0,34% -2,04% -3,17%
17/01/2021 149,76 202201 -0,90% -0,03% 0,07% -0,86%
24/01/2021 151 202202 -4,98% 1,02% 1,73% -2,22%
31/01/2021 152,41 202203 -1,92% 0,10% -1,11% -2,93%
07/02/2021 153,06 202204 -3,15% -0,78% -2,02% -5,95%
14/02/2021 151,44 202205 -2,16% 0,37% -1,00% -2,78%
21/02/2021 149,8 202206 -7,11% 0,18% 3,78% -3,15%
28/02/2021 149,9 202207 0,27% -2,06% 4,63% 2,85%
07/03/2021 149,61 202208 0,84% -3,77% -3,27% -6,20%
14/03/2021 149,15 202209 -2,66% -0,98% -2,86% -6,50%
21/03/2021 149,98 202210 !1,04% !1,01% 3,92% 1,87%
28/03/2021 149,75 202211 2,47% 1,28% 0,25% 3,99%
04/04/2021 148,51 202212 -2,72% -4,75% -1,89% -9,36%
11/04/2021 148,33 202301 4,08% 2,10% -1,17% 5,00%
18/04/2021 147,97 202302 0,78% -1,00% -0,71% -0,92%
25/04/2021 147,09 202303 0,76% 2,30% -0,58% 2,47%
02/05/2021 146,68 202304 0,61% -2,28% 1,17% -0,60%
09/05/2021 145,36 202305 -0,21% -0,51% 1,64% 0,91%
16/05/2021 145,95 202306 -0,24% 0,84% -0,43% 0,17%
23/05/2021 147,34 202307 -2,38% 2,04% 0,43% 0,10%
30/05/2021 148,02 202308 -0,64% -1,38% 2,28% 0,26%
06/06/2021 152,32 202309 !2,10% !0,33% !2,59% !5,52%`.split('\n').map(line => line.split(' '));

const drop = '<button class="drop" aria-label="Apri elenco"><i class="caret"></i></button>';
const filter = '<button class="drop" aria-label="Filtro"><svg viewBox="0 0 10 10"><path d="M3 1h7v1L7 4v5H6V4zM0 8h2v2H0z"/></svg></button>';

// Cells of the pivot headers, by row and column index
const cells = {};
function put(row, col, text, style) {
    cells[row + ':' + col] = [text, style || ''];
}

[[0, 'annomese', 'data', 'Obbligazione', 'BTP italia'],
 [5, 'tipo', 'annomese', 'Obbligazione', 'BTP italiani'],
 [8, 'GG', 'tipo', 'Obbligazione', 'BTP italiani']].forEach(([col, first, second, third, value]) => {
    put(1, col, first, 'pivot');
    put(1, col + 1, drop + '(Tutto)', 'pivot');
    put(2, col, second, 'pivot');
    put(2, col + 1, drop + '(Tutto)', 'pivot');
    put(3, col, third, 'pivot rule');
    put(3, col + 1, filter + value, 'pivot rule');
});

put(5, 0, drop + 'tipo', 'pivot bold rule');
put(5, 1, drop + 'Selezione', 'pivot bold rule');
put(5, 2, 'Valori', 'pivot bold rule');
put(5, 3, 'Totale', 'yellow bold');
put(6, 0, 'FUTURES', 'bold open');
put(6, 1, '6', 'bold num');
put(5, 5, 'Media di Ultimo', 'pivot bold');
put(5, 6, '', 'pivot');
put(6, 5, filter + 'data', 'pivot bold rule');
put(6, 6, 'Totale', 'yellow bold');
put(5, 8, 'Somma di Var8%', 'pivot bold');
put(5, 9, drop + 'DECADE', 'pivot bold');
put(5, 10, '', 'pivot');
put(5, 11, '', 'pivot');
put(5, 12, '', 'pivot');
put(6, 8, drop + 'annomese', 'pivot bold rule');
put(6, 9, '1', 'pivot bold num rule');
put(6, 10, '2', 'pivot bold num rule');
put(6, 11, '3', 'pivot bold num rule');
put(6, 12, 'Totale complessivo', 'yellow bold');

function number(row, col, text, style) {
    const red = text[0] === '-' || text[0] === '!';
    put(row, col, text.replace('!', ''), (style || '') + ' num' + (red ? ' neg' : ''));
}

summary.forEach(([label, value, fill], i) => {
    put(i + 6, 2, label, fill);
    number(i + 6, 3, value, fill);
    if (i > 0) put(i + 6, 0, '', 'rule open');
});

data.forEach((line, i) => {
    [5, 6, 8, 9, 10, 11, 12].forEach((col, n) => {
        number(i + 7, col, line[n], col === 6 || col === 12 ? 'yellow' : '');
    });
});

let html = '<colgroup><col style="width:18px">' +
    columns.map(c => c[1] ? `<col style="width:${c[1]}px">` : '<col>').join('') + '</colgroup>';
html += '<thead><tr><th></th>' +
    columns.map(c => `<th${c[0] === 'C' ? ' class="selected"' : ''}>${c[0]}</th>`).join('') + '</tr></thead><tbody>';
heights.forEach((height, i) => {
    const row = i + 1;
    html += `<tr class="h${height}"><th>${row}</th>`;
    columns.forEach((column, col) => {
        const cell = cells[row + ':' + col] || ['', ''];
        const open = column[2] ? ' open' : '';
        const plain = col > 12 && plainRows.includes(row) ? ' plain' : '';
        html += `<td class="${cell[1]}${open}${plain}">${cell[0]}</td>`;
    });
    html += '</tr>';
});
document.getElementById('cells').innerHTML = html + '</tbody>';

// Chart
const price = [
    122,285, 135,270, 150,262, 157,252, 160,285, 172,290, 182,325, 192,270, 200,240, 210,230, 220,255, 230,238,
    242,240, 252,265, 272,262, 290,275, 296,300, 305,255, 322,255, 330,275, 344,262, 350,295, 358,280, 370,295,
    382,315, 397,325, 415,318, 428,330, 432,370, 440,395, 458,392, 463,335, 477,345, 480,378, 495,385, 512,400,
    515,430, 530,450, 545,465, 560,515, 566,470, 577,495, 587,482, 597,530, 603,570, 610,635, 617,590, 628,570,
    636,525, 650,535, 662,572, 668,545, 675,500, 687,490, 700,492, 706,540, 720,575, 733,612, 748,612, 755,635,
    759,675, 768,622, 777,672, 793,675, 797,640, 803,605, 812,640, 825,610, 838,575, 850,565, 857,605, 870,615,
    875,655, 890,690, 900,645, 913,600, 920,620, 930,640, 937,600, 942,630, 957,635, 965,655, 978,665, 988,630,
    1000,610, 1010,620, 1022,610, 1045,645, 1065,615, 1080,635, 1092,645, 1100,610, 1120,612, 1133,605, 1155,645,
    1162,610, 1185,615, 1210,640, 1230,620, 1250,650, 1270,690, 1282,675, 1297,692, 1315,660, 1325,640, 1345,630,
    1358,605, 1375,595, 1382,575, 1390,565, 1400,590, 1420,605, 1438,590, 1450,605, 1467,600
];

const fast = [
    238,269, 262,266, 285,263, 307,260, 330,261, 352,266, 372,273, 393,281, 414,291, 434,303, 451,319, 468,336,
    488,347, 507,361, 525,376, 541,394, 558,411, 575,427, 592,444, 604,464, 616,486, 631,506, 650,522, 668,534,
    688,538, 712,543, 735,544, 755,554, 771,570, 788,587, 804,605, 820,625, 842,629, 866,627, 890,629, 910,625,
    933,622, 956,625, 977,634, 997,638, 1016,630, 1040,630, 1064,633, 1088,633, 1110,629, 1132,626, 1155,630,
    1177,624, 1200,624, 1221,624, 1246,628, 1267,635, 1288,643, 1309,656, 1331,662, 1353,663, 1375,656, 1393,643,
    1412,626, 1430,614, 1450,604
];

const slow = [
    513,300, 536,310, 558,322, 581,333, 602,347, 622,365, 641,380, 662,394, 684,408, 705,421, 726,436, 746,453,
    765,471, 784,488, 804,504, 825,519, 847,531, 869,546, 891,560, 912,574, 934,583, 958,591, 981,600, 1006,606,
    1031,608, 1056,614, 1080,624, 1106,628, 1134,630, 1150,634, 1177,628, 1205,628, 1235,627, 1262,631, 1288,634,
    1315,636, 1342,637, 1370,638, 1393,634, 1421,631, 1447,630
];

const dates = `04/10/2020 24/01/2021 16/05/2021 03/09/2021 27/09/2021 19/10/2021 10/11/2021 02/12/2021 24/12/2021
18/01/2022 09/02/2022 03/03/2022 25/03/2022 19/04/2022 11/05/2022 02/06/2022 24/06/2022 18/07/2022 09/08/2022
31/08/2022 22/09/2022 14/10/2022 07/11/2022 29/11/2022 21/12/2022 16/01/2023 07/02/2023 01/03/2023 23/03/2023
18/04/2023 10/05/2023 01/06/2023 23/06/2023 17/07/2023 08/08/2023 30/08/2023 21/09/2023 13/10/2023 06/11/2023
28/11/2023 20/12/2023 15/01/2024 06/02/2024`.split(/\s+/);

function dots(points, radius, color) {
    let out = '';
    for (let i = 0; i < points.length; i += 2) {
        out += `<circle cx="${points[i]}" cy="${points[i + 1]}" r="${radius}" fill="${color}"/>`;
    }
    return out;
}

// Daily markers between the turning points, with a small swing
const daily = [];
for (let i = 0; i < price.length - 2; i += 2) {
    const dx = price[i + 2] - price[i];
    const dy = price[i + 3] - price[i + 1];
    const steps = Math.max(2, Math.round(Math.hypot(dx, dy) / 6));
    for (let s = 0; s < steps; s++) {
        daily.push(price[i] + dx * s / steps, price[i + 1] + dy * s / steps + 6 * Math.sin(daily.length * 1.3));
    }
}

let plot = '';
[160, 150, 140, 130, 120, 110, 100].forEach((value, i) => {
    const y = 183 + i * 98;
    if (value === 160 || value === 130 || value === 120) {
        plot += `<path d="M122 ${y}H1467" stroke="#d0d0d0" stroke-width="3"/>`;
    }
    plot += `<text x="98" y="${y + 6}" text-anchor="end">${value}</text>`;
});
dates.forEach((date, i) => {
    plot += `<text transform="translate(${Math.round(130 + i * 31.5)} 905) rotate(-90)">${date}</text>`;
});
plot += `<polyline points="${daily.join(' ')}" stroke="#4472c4" stroke-width="11" stroke-linejoin="round"/>`;
plot += dots(daily, 8, '#4472c4');
const trend = [];
for (let i = 0; i < 53; i++) {
    trend.push(122 + i * 25.7, 296 + i * 8.44);
}
plot += dots(trend, 7, '#f00000') + dots(slow, 7, '#70ad47') + dots(fast, 6, '#ffff00');
document.getElementById('plot').innerHTML = plot;
```
